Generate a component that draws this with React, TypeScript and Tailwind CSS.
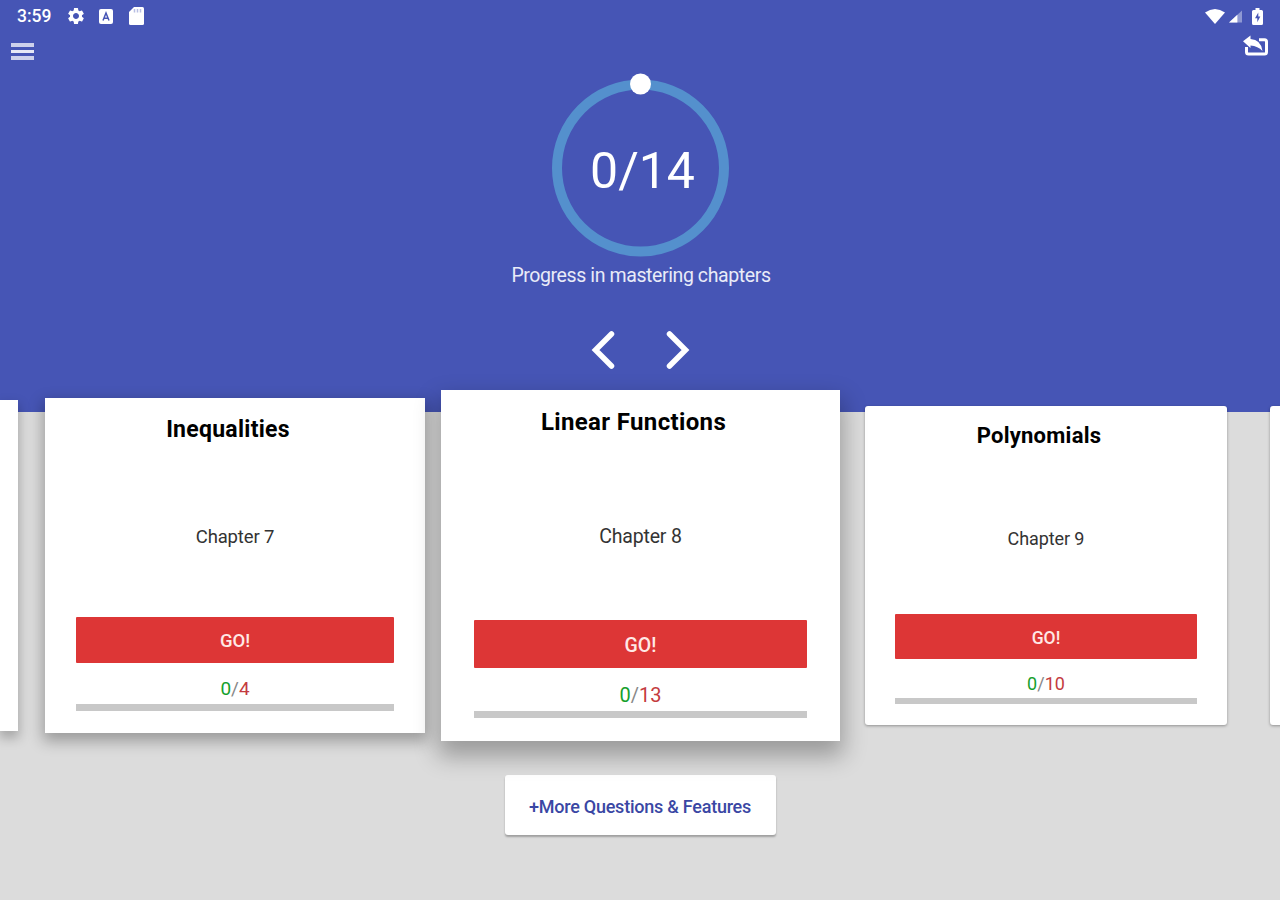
import { MdSettings } from 'react-icons/md'

type Chapter = {
  title: string
  chapter: number
  total: number
  card: string
  heading: string
  label: string
  button: string
  score: string
  bar: string
}

const chapters: Chapter[] = [
  {
    title: 'Inequalities',
    chapter: 7,
    total: 4,
    card: 'ml-[27px] h-[335px] w-[380px] px-[31px] pt-[20px] shadow-[0_6px_14px_2px_rgba(0,0,0,0.3)]',
    heading: 'h-6 text-[23px] leading-6 tracking-[0.27px]',
    label: 'mt-[83px] h-6 text-[18.5px] leading-6 tracking-[-0.15px]',
    button: 'mt-[68px] h-[46px] pt-[3px] text-[18.5px]',
    score: 'mt-[14px] h-6 text-[19px] leading-6',
    bar: 'mt-[3px] h-[7px]',
  },
  {
    title: 'Linear Functions',
    chapter: 8,
    total: 13,
    card: 'z-10 ml-4 h-[351px] w-[399px] px-[33px] pt-[20px] shadow-[0_12px_22px_3px_rgba(0,0,0,0.3)]',
    heading: 'h-6 text-[24px] leading-6 tracking-[0.36px]',
    label: 'mt-[91px] h-6 text-[19.5px] leading-6 tracking-[-0.2px]',
    button: 'mt-[71px] h-[48px] pt-[4px] text-[19.5px]',
    score: 'mt-[15px] h-6 text-[20px] leading-6',
    bar: 'mt-[4px] h-[7px]',
  },
  {
    title: 'Polynomials',
    chapter: 9,
    total: 10,
    card: 'ml-[25px] h-[319px] w-[362px] rounded-[3px] px-[30px] pt-[18px] shadow-[0_1px_3px_rgba(0,0,0,0.35)]',
    heading: 'h-6 text-[22px] leading-6 tracking-[0.25px]',
    label: 'mt-[79px] h-6 text-[18px] leading-6 tracking-[-0.1px]',
    button: 'mt-[63px] h-[45px] pt-[4px] text-[17.5px]',
    score: 'mt-[13px] h-6 text-[18px] leading-6',
    bar: 'mt-[2px] h-[6px]',
  },
]

const StatusBar = () => (
  <div className="flex h-8 items-center justify-between pl-[17px] pr-[17px]">
    <div className="flex items-center">
      <span className="w-[49px] pt-[2px] text-[17.5px] font-medium leading-none">3:59</span>
      <MdSettings className="h-5 w-5" />
      <svg className="ml-[13px] h-[15px] w-[14px]" viewBox="0 0 14 15">
        <rect width="14" height="15" rx="2" fill="#fff" />
        <path d="M4 11.5 7 4l3 7.5M5 9.2h4" fill="none" stroke="#4655b5" strokeWidth="1.5" />
      </svg>
      <svg className="ml-4 h-[18px] w-[15px]" viewBox="0 0 15 18">
        <path d="M5 0h8.5Q15 0 15 1.5v15q0 1.5-1.5 1.5h-12Q0 18 0 16.5V5z" fill="#fff" />
        <path d="M5.5 2v3.5M8.5 2v3.5M11.5 2v3.5" stroke="#b8bee3" strokeWidth="1.5" />
      </svg>
    </div>
    <div className="flex items-center">
      <svg className="h-[15px] w-5" viewBox="0 0 20 15">
        <path d="M0 3.5Q10-3.5 20 3.5L10 15z" fill="#fff" />
      </svg>
      <svg className="ml-[4px] h-[13px] w-[13px]" viewBox="0 0 14 13">
        <path d="M14 0v13H0z" fill="#8f99d3" />
        <path d="M9 4.7V13H0z" fill="#fff" />
      </svg>
      <svg className="ml-[10px] h-[17px] w-[11px]" viewBox="0 0 11 17">
        <path d="M3.5 0h4v2H9.5Q11 2 11 3.5v12Q11 17 9.5 17h-8Q0 17 0 15.5v-12Q0 2 1.5 2h2z" fill="#fff" />
        <path d="M6.3 4.5 3 10.2h2.3v4L8.3 8.5H6.3z" fill="#4655b5" />
      </svg>
    </div>
  </div>
)

const Toolbar = () => (
  <div className="flex h-8 items-start justify-between pl-[11px] pr-3">
    <button className="mt-[11px] flex flex-col gap-[3px]" aria-label="Menu">
      <span className="h-1 w-[23px] bg-[#cdd1ec]" />
      <span className="h-[3px] w-[23px] bg-[#e6e8f6]" />
      <span className="h-1 w-[23px] bg-[#cdd1ec]" />
    </button>
    <button className="mt-[3px]" aria-label="Exit">
      <svg className="h-[22px] w-[25px]" viewBox="0 0 25 22">
        <path d="M16 4.7h5.5q2 0 2 2V17q0 2-2 2h-16q-2 0-2-2v-5" fill="none" stroke="#fff" strokeWidth="3" />
        <path d="M0 6.2 7.5.5V4Q18 4.500 19.500 16 15 11 7.500 10.500V13z" fill="#fff" />
      </svg>
    </button>
  </div>
)

const ProgressRing = () => (
  <div className="relative mt-2 flex h-[186px] w-[180px] items-center justify-center">
    <svg className="absolute inset-0 h-full w-full" viewBox="0 0 180 186">
      <circle cx="90.5" cy="96" r="83.5" fill="none" stroke="#5490cd" strokeWidth="10" />
      <circle cx="90.5" cy="12" r="10.5" fill="#fff" />
    </svg>
    <span className="relative mt-[12px] ml-[5px] text-[50px] leading-none">0/14</span>
  </div>
)

const ChapterCard = ({ data }: { data: Chapter }) => (
  <article className={`flex shrink-0 flex-col bg-white text-center ${data.card}`}>
    <h2 className={`pr-[14px] font-bold whitespace-nowrap text-black ${data.heading}`}>{data.title}</h2>
    <p className={`text-[#333] ${data.label}`}>Chapter {data.chapter}</p>
    <button className={`flex shrink-0 items-center justify-center rounded-[1px] bg-[#dd3636] font-medium text-[#ffe9e6] ${data.button}`}>
      GO!
    </button>
    <p className={`text-[#888] ${data.score}`}>
      <span className="text-[#16a02c]">0</span>/<span className="text-[#c43b40]">{data.total}</span>
    </p>
    <div className={`shrink-0 bg-[#c8c8c8] ${data.bar}`} />
  </article>
)

const App = () => {
  return (
    <main className="flex h-[900px] w-[1280px] flex-col overflow-hidden bg-[#dcdcdc] font-[Roboto,sans-serif]">
      <header className="h-[412px] shrink-0 bg-[#4655b5] text-white">
        <StatusBar />
        <Toolbar />
        <div className="flex flex-col items-center">
          <ProgressRing />
          <p className="mt-[6px] pl-[2px] text-[19.5px] leading-6 tracking-[-0.4px] text-[#e9ebf8]">Progress in mastering chapters</p>
          <div className="mt-[42px] flex gap-[51px]">
            <svg className="h-[40px] w-6" viewBox="0 0 24 40">
              <path d="m20.5 4-16 16 16 16" fill="none" stroke="#fff" strokeWidth="5.5" strokeLinecap="round" />
            </svg>
            <svg className="h-[40px] w-6" viewBox="0 0 24 40">
              <path d="m3.5 4 16 16-16 16" fill="none" stroke="#fff" strokeWidth="5.5" strokeLinecap="round" />
            </svg>
          </div>
        </div>
      </header>

      <section className="-mt-[22px] flex h-[351px] shrink-0 items-center">
        <div className="h-[331px] w-[18px] shrink-0 bg-white shadow-[0_6px_12px_1px_rgba(0,0,0,0.25)]" />
        {chapters.map((c) => (
          <ChapterCard key={c.chapter} data={c} />
        ))}
        <div className="ml-[43px] h-[319px] w-[30px] shrink-0 rounded-[3px] bg-white shadow-[0_1px_3px_rgba(0,0,0,0.35)]" />
      </section>

      <button className="mt-[34px] flex h-[60px] w-[271px] shrink-0 items-center justify-center self-center rounded-[3px] bg-white pt-[2px] text-[18px] font-medium tracking-[-0.24px] whitespace-nowrap text-[#3a47a4] shadow-[0_2px_2px_rgba(0,0,0,0.28)]">
        +More Questions &amp; Features
      </button>
    </main>
  )
}

export default App
